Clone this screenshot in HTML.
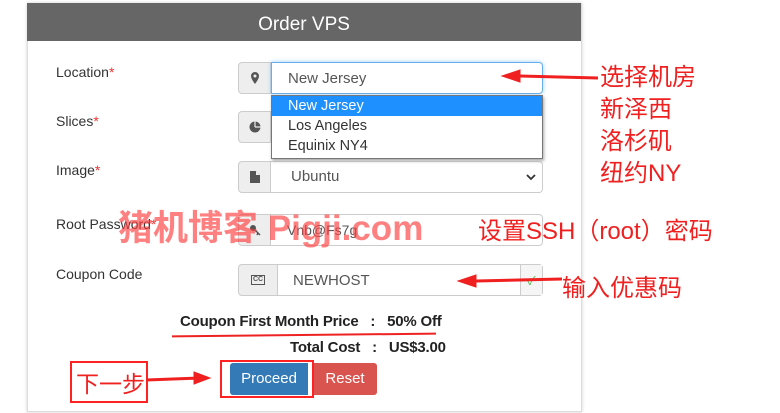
<!DOCTYPE html><html><head><meta charset="utf-8"><style>
body{margin:0;width:780px;height:413px;background:#fff;position:relative;overflow:hidden;font-family:"Liberation Sans","Noto Sans CJK SC",sans-serif;}
.a{position:absolute}
.panel{left:27px;top:3px;width:553px;height:407px;border:1px solid #ddd;box-shadow:0 0 3px #ccc;background:#fff}
.hd{left:27px;top:3px;width:554px;height:38px;background:#666;color:#fff;font-size:19px;text-align:center;line-height:44px}
.lbl{font-size:14px;color:#333;left:56px}
.lbl b{color:#e33;font-weight:normal}
.ad{left:238px;width:33px;height:32px;background:#eee;border:1px solid #ccc;border-radius:4px 0 0 4px;box-sizing:border-box;display:flex;align-items:center;justify-content:center}
.in{left:271px;width:272px;height:32px;border:1px solid #ccc;border-left:none;border-radius:0 4px 4px 0;box-sizing:border-box;font-size:14px;color:#555;line-height:30px;padding-left:20px}
.red{color:#f02020;font-size:23px}
</style></head><body>
<div class="a panel"></div>
<div class="a hd">Order VPS</div>
<div class="a lbl" style="top:64px">Location<b>*</b></div>
<div class="a lbl" style="top:113px">Slices<b>*</b></div>
<div class="a lbl" style="top:162px">Image<b>*</b></div>
<div class="a lbl" style="top:216px">Root Password<b>*</b></div>
<div class="a lbl" style="top:266px">Coupon Code</div>
<div class="a ad" style="top:62px"><svg width="10" height="12"><path d="M5 0a4 4 0 0 0-4 4c0 3 4 8 4 8s4-5 4-8a4 4 0 0 0-4-4zm0 2.5a1.5 1.5 0 1 1 0 3a1.5 1.5 0 0 1 0-3z" fill="#555"/></svg></div>
<div class="a in" style="top:62px;border:1px solid #66afe9;box-shadow:0 0 4px #9cf;line-height:32px;padding-left:16px;font-size:15px">New Jersey</div>
<div class="a ad" style="top:111px"><svg width="12" height="12"><circle cx="6" cy="6" r="5.5" fill="#555"/><path d="M6 6V0M6 6H12" stroke="#eee" stroke-width="1.2"/></svg></div>
<div class="a in" style="top:111px"></div>
<div class="a ad" style="top:161px"><svg width="10" height="12"><path d="M0 0h6l4 4v8H0z" fill="#555"/><path d="M6 0v4h4" fill="#eee"/></svg></div>
<div class="a in" style="top:161px;padding-left:20px;font-size:15px">Ubuntu<svg style="position:absolute;right:6px;top:12px" width="10" height="7"><path d="M1 1l4 4l4-4" stroke="#333" stroke-width="1.8" fill="none"/></svg></div>
<div class="a ad" style="top:214px"><svg width="12" height="12"><circle cx="4" cy="4" r="3" fill="#555"/><path d="M6 6l5 5M9 9l-1 2" stroke="#555" stroke-width="1.5"/></svg></div>
<div class="a in" style="top:214px;padding-left:16px">Vnb@Fs7g</div>
<div class="a ad" style="top:264px;width:40px"><div style="border:1.5px solid #555;font-size:7px;font-weight:bold;color:#555;padding:0 1px;line-height:8px">CC</div></div>
<div class="a in" style="top:264px;left:278px;width:265px;padding-left:15px;line-height:32px;font-size:15px">NEWHOST<span style="position:absolute;right:0;top:0;width:21px;height:30px;border-left:1px solid #ccc;background:#f5f5f5;color:#5b5;font-size:12px;text-align:center">✓</span></div>
<div class="a" style="left:271px;top:95px;width:270px;height:62px;border:1px solid #777;background:#fff;font-size:14.5px;color:#333;box-shadow:1px 2px 3px #aaa">
<div style="background:#1e90ff;color:#fff;height:20px;line-height:20px;padding-left:16px">New Jersey</div>
<div style="height:20px;line-height:20px;padding-left:16px">Los Angeles</div>
<div style="height:20px;line-height:20px;padding-left:16px">Equinix NY4</div></div>
<div class="a" style="left:180px;top:313px;font-size:15px;font-weight:bold;color:#222;white-space:pre;letter-spacing:-0.2px">Coupon First Month Price   :   50% Off</div>
<div class="a" style="left:290px;top:339px;font-size:15px;font-weight:bold;color:#222;white-space:pre;letter-spacing:-0.2px">Total Cost   :   US$3.00</div>
<div class="a" style="left:172px;top:334px;width:264px;height:2px;background:#e22;transform:rotate(-0.6deg)"></div>
<div class="a" style="left:230px;top:363px;width:78px;height:32px;background:#337ab7;color:#fff;font-size:15px;text-align:center;line-height:32px;border-radius:3px 0 0 3px">Proceed</div>
<div class="a" style="left:313px;top:363px;width:64px;height:32px;background:#d9534f;color:#fff;font-size:15px;text-align:center;line-height:32px;border-radius:0 3px 3px 0">Reset</div>
<div class="a" style="left:220px;top:360px;width:90px;height:34px;border:2px solid #f22"></div>
<div class="a" style="left:70px;top:361px;width:74px;height:38px;border:2px solid #f22"></div>
<div class="a red" style="left:76px;top:365px;font-size:23px">下一步</div>
<svg class="a" style="left:0;top:0" width="780" height="413"><g fill="#f02020" stroke="#f02020">
<path d="M146 380L200 378" stroke-width="3"/><path d="M194 372L210 378L194 384z"/>
<path d="M520 76L598 78" stroke-width="3"/><path d="M520 70L502 76L520 82z"/>
<path d="M476 281L562 279" stroke-width="3"/><path d="M476 275L458 281L476 287z"/></g></svg>
<div class="a red" style="left:600px;top:62px;line-height:32px;font-size:24px">选择机房<br>新泽西<br>洛杉矶<br>纽约NY</div>
<div class="a red" style="left:478px;top:211px;font-size:24px">设置SSH（root）密码</div>
<div class="a red" style="left:562px;top:268px;font-size:24px">输入优惠码</div>
<div class="a" style="left:118px;top:200px;font-size:35px;font-weight:bold;color:rgba(255,60,60,0.65)">猪机博客 Pigji.com</div>
</body></html>
